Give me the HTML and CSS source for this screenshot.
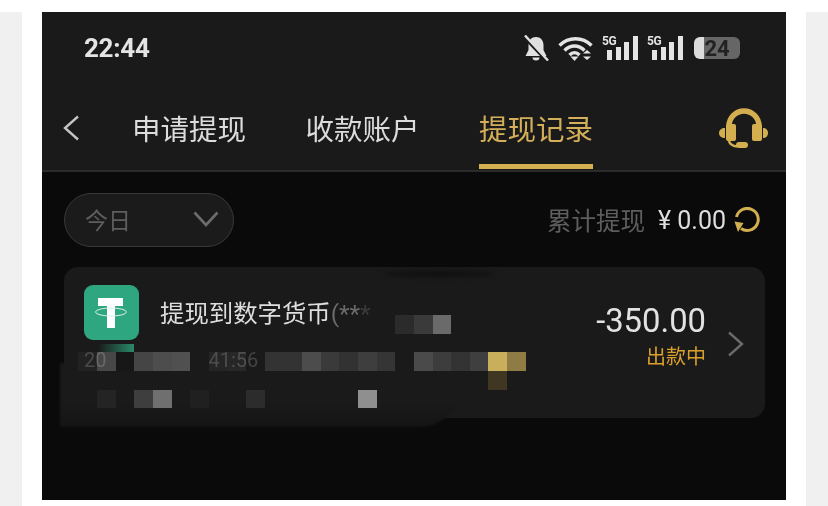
FILE: index.html
```html
<!DOCTYPE html>
<html lang="zh-CN">

<head>
    <title>提现记录</title>
    <link rel="stylesheet" href="styles.css">
</head>

<body>
    <div class="side"></div>
    <div class="phone">
        <div class="top">
            <div class="status">
                <span class="time">22:44</span>
                <div class="status_icons">
                    <svg class="bell" viewBox="0 0 26 26">
                        <path d="M13 2c-4.500 0-7.500 3.500-7.500 8v5L2.500 21h21l-3-6v-5c0-4.500-3-8-7.500-8z" fill="#e0e0e0" />
                        <path d="M9.500 22.500a3.500 3 0 0 0 7 0z" fill="#e0e0e0" />
                        <path d="M2 3.500l21 22" stroke="#1a1a1a" stroke-width="2.500" />
                        <path d="M2 0.500l23 25" stroke="#e0e0e0" stroke-width="2.400" />
                    </svg>
                    <svg class="wifi" viewBox="0 0 35 25" fill="none" stroke="#e4e4e4" stroke-width="3.400">
                        <path d="M1.500 9.500c9-9 23-9 32 0" />
                        <path d="M6.500 14.500c6-6 14-6 20 0" />
                        <path d="M11.500 19c3-3 7-3 10 0" />
                        <path d="M12.500 20.500h8l-4 4.500z" fill="#e4e4e4" stroke="none" />
                        <path d="M25 17.500h8l-4-3.500zM25 20.500h8l-4 3.500z" fill="#e4e4e4" stroke="none" />
                    </svg>
                    <div class="signal">
                        <span class="signal_5g">5G</span>
                        <i class="bar bar1"></i><i class="bar bar2"></i><i class="bar bar3"></i><i class="bar bar4"></i>
                    </div>
                    <div class="signal">
                        <span class="signal_5g">5G</span>
                        <i class="bar bar1"></i><i class="bar bar2"></i><i class="bar bar3"></i><i class="bar bar4"></i>
                    </div>
                    <div class="battery">
                        <span class="battery_num">24</span>
                    </div>
                </div>
            </div>
            <div class="nav">
                <svg class="back" viewBox="0 0 18 26" fill="none" stroke="#c4c4c4" stroke-width="2.400">
                    <path d="M16 1.500L3 13l13 11.500" />
                </svg>
                <div class="tabs">
                    <div class="tab">申请提现</div>
                    <div class="tab">收款账户</div>
                    <div class="tab tab_active">提现记录</div>
                </div>
                <svg class="headset" viewBox="0 0 49 42">
                    <path d="M10 22v-4a15 15 0 0 1 30 0v4" fill="none" stroke="#d4af4f" stroke-width="5.500" />
                    <rect x="7" y="16" width="10" height="17" rx="2" fill="#d4af4f" />
                    <rect x="33" y="16" width="10" height="17" rx="2" fill="#d4af4f" />
                    <path d="M6 20v10c-3.500 0-6-2-6-5s2.500-5 6-5z" fill="#d4af4f" />
                    <path d="M44 20v10c3 0 5-2 5-5s-2-5-5-5z" fill="#d4af4f" />
                    <path d="M10 33c1 4 4 5 8 5.500" fill="none" stroke="#d4af4f" stroke-width="2.500" />
                    <rect x="17" y="34" width="12" height="6" rx="3" fill="#d4af4f" />
                </svg>
            </div>
        </div>
        <div class="content">
            <div class="filter_row">
                <div class="pill">
                    <span class="pill_text">今日</span>
                    <svg class="pill_arrow" viewBox="0 0 26 16" fill="none" stroke="#6c6c6c" stroke-width="2.600">
                        <path d="M1.500 1.500L13 14 24.500 1.500" />
                    </svg>
                </div>
                <div class="total">
                    <span class="total_label">累计提现</span>
                    <span class="total_num">¥ 0.00</span>
                    <svg class="refresh" viewBox="0 0 28 26" fill="none">
                        <path d="M2.500 10A11 11 0 1 1 7 21.500" stroke="#d4af4f" stroke-width="3" />
                        <path d="M0.500 14.500l9 1.500-5.500 9z" fill="#d4af4f" />
                    </svg>
                </div>
            </div>
            <div class="card">
                <div class="card_smudge"></div>
                <div class="card_spill"></div>
                <div class="card_main">
                    <div class="card_title_row">
                        <svg class="usdt" viewBox="0 0 55 55">
                            <rect width="55" height="55" rx="9" fill="#2ea67f" />
                            <path d="M14 13h25v8H31v22h-8V21h-9z" fill="#fff" />
                            <ellipse cx="27" cy="27" rx="15.500" ry="4" fill="none" stroke="#d8f0e6" stroke-width="1" />
                        </svg>
                        <span class="card_title">提现到数字货币<span class="card_stars">(**<span class="card_star_fade">*</span></span></span>
                    </div>
                    <div class="card_date">
                        <span>20</span>
                        <span>41:56</span>
                    </div>
                </div>
                <div class="card_right">
                    <div class="card_money">
                        <div class="amount">-350.00</div>
                        <div class="state">出款中</div>
                    </div>
                    <svg class="card_arrow" viewBox="0 0 18 26" fill="none" stroke="#6a6a6a" stroke-width="2.400">
                        <path d="M2 1.500L15 13 2 24.500" />
                    </svg>
                </div>
                <div class="green_smear"></div>
                <div id="mosaic" class="mosaic"></div>
            </div>
        </div>
    </div>
    <div class="side"></div>
    <script>
        // row, column, colour of every blurred square
        const cells = [
            [0, 18, '#2b2b2b'], [0, 19, '#3a3a3a'], [0, 20, '#6a6a6a'],
            [2, 1, 'rgba(255,255,255,.04)'], [2, 2, 'rgba(255,255,255,.2)'], [2, 3, '#171717'],
            [2, 4, '#454545'], [2, 5, '#4d4d4d'], [2, 6, '#505050'],
            [2, 8, 'rgba(255,255,255,.05)'], [2, 9, 'rgba(255,255,255,.06)'], [2, 11, '#333'], [2, 12, '#333'], [2, 13, '#4c4c4c'],
            [2, 14, '#3a3a3a'], [2, 15, '#323232'], [2, 16, '#3e3e3e'], [2, 17, '#353535'], [2, 19, '#4a4a4a'],
            [2, 20, '#3d3d3d'], [2, 21, '#333'], [2, 22, '#3f3f3f'], [2, 23, '#c9ae5c'], [2, 24, '#8f7c45'],
            [3, 23, '#3f3722'],
            [4, 2, '#242424'], [4, 4, '#3e3e3e'], [4, 5, '#6f6f6f'], [4, 7, '#202020'], [4, 10, '#2c2c2c'],
            [4, 16, '#8f8f8f']
        ]
        const mosaic = document.getElementById('mosaic')
        cells.forEach(c => {
            const el = document.createElement('span')
            el.style.gridRow = c[0] + 1
            el.style.gridColumn = c[1] + 1
            el.style.background = c[2]
            mosaic.appendChild(el)
        })
    </script>
</body>

</html>
```

FILE: styles.css
```css
* {
    margin: 0;
    padding: 0;
    box-sizing: border-box;
}

body {
    display: flex;
    gap: 20px;
    height: 506px;
    padding-top: 12px;
    background-color: white;
    overflow: hidden;
    font-family: "Noto Sans CJK SC", "Roboto", sans-serif;
}

.side {
    width: 22px;
    height: 494px;
    background-color: #f0f0f0;
}

.phone {
    width: 744px;
    height: 488px;
    background-color: #0a0a0a;
    filter: blur(0.4px);
    overflow: hidden;
}

.top {
    height: 160px;
    background-color: #1a1a1a;
    border-bottom: 2px solid #2b2b2b;
}

.status {
    display: flex;
    align-items: center;
    justify-content: space-between;
    height: 72px;
    padding: 0 46px 0 42px;
}

.time {
    font-family: "Roboto", sans-serif;
    font-size: 26px;
    font-weight: 700;
    letter-spacing: -0.3px;
    color: #e4e4e4;
}

.status_icons {
    display: flex;
    align-items: center;
}

.bell {
    width: 26px;
    height: 26px;
    margin-right: 9px;
}

.wifi {
    width: 35px;
    height: 25px;
    margin-right: 9px;
}

.signal {
    position: relative;
    display: flex;
    align-items: flex-end;
    gap: 3.7px;
    width: 36px;
    height: 24px;
    margin-right: 9px;
    padding-left: 5px;
}

.signal_5g {
    position: absolute;
    left: 0;
    top: -1px;
    font-family: "Roboto", sans-serif;
    font-size: 12px;
    line-height: 12px;
    font-weight: 700;
    letter-spacing: -0.5px;
    color: #e4e4e4;
}

.bar {
    width: 5px;
    background-color: #e4e4e4;
}

.bar1 {
    height: 10px;
}

.bar2 {
    height: 13px;
}

.bar3 {
    height: 18px;
}

.bar4 {
    height: 24px;
}

.battery {
    position: relative;
    display: flex;
    align-items: center;
    justify-content: center;
    width: 46px;
    height: 22px;
    margin-left: 2px;
    border-radius: 6px;
    background: linear-gradient(90deg, #dcdcdc 0, #dcdcdc 10px, #666 10px);
}

.battery_num {
    font-family: "Roboto", sans-serif;
    font-size: 22px;
    font-weight: 700;
    color: #222;
}

.nav {
    display: flex;
    align-items: center;
    height: 86px;
    padding-left: 20px;
}

.back {
    width: 18px;
    height: 26px;
    margin-top: 2px;
}

.tabs {
    display: flex;
    gap: 59.5px;
    margin-left: 52px;
    height: 86px;
}

.tab {
    padding-top: 22px;
    font-size: 28.500px;
    line-height: 44px;
    color: #dcdcdc;
}

.tab_active {
    color: #d4af5a;
    border-bottom: 5px solid #d4af4f;
    height: 85px;
}

.headset {
    width: 49px;
    height: 42px;
    margin-left: 126px;
    margin-top: 3px;
}

.content {
    padding: 21px 21px 0 22px;
}

.filter_row {
    display: flex;
    align-items: center;
    justify-content: space-between;
    height: 54px;
}

.pill {
    display: flex;
    align-items: center;
    justify-content: space-between;
    width: 170px;
    height: 54px;
    padding: 0 14px 2px 20px;
    border: 1.500px solid #383838;
    border-radius: 27px;
    background-color: #1b1b1b;
}

.pill_text {
    font-size: 23px;
    color: #5e5e5e;
}

.pill_arrow {
    width: 26px;
    height: 16px;
}

.total {
    display: flex;
    align-items: center;
}

.total_label {
    margin-bottom: 2px;
    font-size: 24.500px;
    color: #5e5e5e;
}

.total_num {
    margin-left: 13px;
    font-family: "Roboto", sans-serif;
    font-size: 25px;
    color: #dedede;
}

.refresh {
    width: 28px;
    height: 26px;
    margin-left: 8px;
    margin-right: 3px;
}

.card {
    position: relative;
    display: flex;
    justify-content: space-between;
    height: 151px;
    margin-top: 20px;
    padding: 18px 20px;
    border-radius: 14px;
    background-color: #1a1a1a;
}

.card_smudge {
    position: absolute;
    left: 320px;
    top: 4px;
    width: 110px;
    height: 6px;
    border-radius: 50%;
    background-color: #101010;
    filter: blur(2px);
}

.card_spill {
    position: absolute;
    left: -4px;
    top: 96px;
    width: 400px;
    height: 64px;
    border-radius: 0 0 40px 0;
    background: linear-gradient(180deg, #1a1a1a 0, #1a1a1a 60%, #151515 100%);
    filter: blur(1px);
}

.card_main {
    position: relative;
}

.card_title_row {
    display: flex;
    align-items: flex-start;
}

.usdt {
    width: 55px;
    height: 55px;
}

.card_title {
    margin-left: 21px;
    font-size: 24.400px;
    line-height: 54px;
    color: #dedede;
    white-space: nowrap;
}

.card_stars {
    font-family: "Roboto", sans-serif;
    color: #6a6a6a;
}

.card_star_fade {
    opacity: 0.400;
}

.card_date {
    display: flex;
    gap: 102px;
    margin-top: 7px;
    font-family: "Roboto", sans-serif;
    font-size: 20px;
    line-height: 24px;
    color: #444;
}

.card_right {
    position: relative;
    display: flex;
    align-items: flex-start;
}

.card_money {
    text-align: right;
}

.amount {
    margin-top: 16px;
    font-family: "Roboto", sans-serif;
    font-size: 32.800px;
    line-height: 40px;
    color: #e2e2e2;
}

.state {
    margin-top: 2px;
    font-size: 20px;
    line-height: 26px;
    color: #d9a02c;
}

.card_arrow {
    width: 18px;
    height: 26px;
    margin-left: 21px;
    margin-top: 46px;
}

.green_smear {
    position: absolute;
    left: 34px;
    top: 77px;
    width: 36px;
    height: 8px;
    background: linear-gradient(90deg, rgba(42, 138, 106, 0) 0, #2a8a6a 100%);
}

.mosaic {
    position: absolute;
    left: -4.300px;
    top: 48px;
    display: grid;
    grid-template-columns: repeat(25, 18.65px);
    grid-template-rows: repeat(5, 18.65px);
}
```
